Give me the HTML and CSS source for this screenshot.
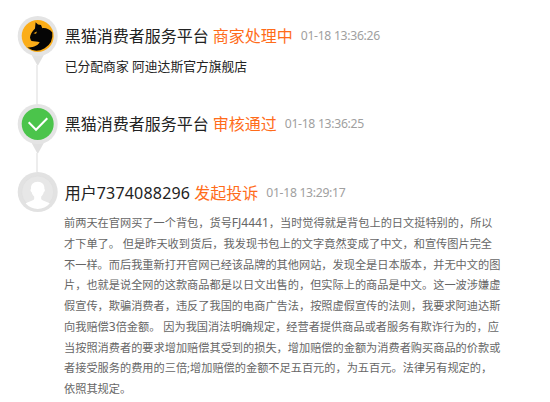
FILE: index.html
```html
<!DOCTYPE html>
<html lang="zh-CN">
<head>
  <meta charset="UTF-8">
  <title>投诉进度</title>
  <link rel="stylesheet" href="styles.css">
</head>
<body>

  <ul class="timeline">
    <li class="step step-assigned">
      <div class="marker">
        <svg width="40" height="49" viewBox="0 0 40 49">
          <path d="M12 36h15.500L19.700 50z" fill="#e0e0e0"/>
          <circle cx="19.700" cy="20" r="20" fill="#e4e4e4"/>
          <circle cx="19.700" cy="20" r="16" fill="#fbad18"/>
          <path d="M17.600 6.200L20 8.600L23 8.900L24.300 12.200C28 11.700 32 13.500 34.300 16.500A16 16 0 0 1 9.300 31.600C14 31 19 30.800 21.700 26.200C19.500 25 16 25.400 13.700 24.900C12.300 24 12.500 22.800 12 21.500C12.300 18.500 14 15.500 17 12.500Z" fill="#050505"/>
          <path d="M15.500 17.300l3.500-1.800-1 2.300z" fill="#fbad18"/>
        </svg>
        <span class="line"></span>
      </div>
      <div class="content">
        <div class="title">
          <span class="name">黑猫消费者服务平台</span>
          <span class="status">商家处理中</span>
          <span class="time">01-18 13:36:26</span>
        </div>
        <p class="note">已分配商家 阿迪达斯官方旗舰店</p>
      </div>
    </li>

    <li class="step step-approved">
      <div class="marker">
        <svg width="40" height="49" viewBox="0 0 40 49">
          <path d="M12 36h15.500L19.700 50z" fill="#e0e0e0"/>
          <circle cx="19.700" cy="20" r="20" fill="#e4e4e4"/>
          <circle cx="19.700" cy="20" r="16" fill="#4bc44b"/>
          <path d="M10.700 18.300l7.300 7.400 11.300-11.500" fill="none" stroke="#fff" stroke-width="2"/>
        </svg>
        <span class="line"></span>
      </div>
      <div class="content">
        <div class="title">
          <span class="name">黑猫消费者服务平台</span>
          <span class="status">审核通过</span>
          <span class="time">01-18 13:36:25</span>
        </div>
      </div>
    </li>

    <li class="step step-created">
      <div class="marker">
        <svg width="40" height="40" viewBox="0 0 40 40">
          <circle cx="19.700" cy="20" r="20" fill="#e2e2e2"/>
          <circle cx="19.700" cy="20" r="16" fill="#e7e7e7" stroke="#dedede" stroke-width=".6"/>
          <path d="M19.700 9.700c-4.500 0-7.100 3-6.700 7.300-.8.200-.7 2.700.7 3.300.5 2.200 1.300 3.300 2.500 4.200v2.500c-1 2-6 2.400-8.500 4.500a16 16 0 0 0 24 0c-2.500-2.100-7.500-2.500-8.500-4.500v-2.500c1.200-.9 2-2 2.500-4.200 1.400-.6 1.500-3.100.7-3.300.4-4.300-2.200-7.300-6.700-7.300z" fill="#fff"/>
        </svg>
      </div>
      <div class="content">
        <div class="title">
          <span class="name">用户<span class="uid">7374088296</span></span>
          <span class="status">发起投诉</span>
          <span class="time">01-18 13:29:17</span>
        </div>
        <p class="detail">
          前两天在官网买了一个背包，货号<span class="code">FJ4441</span>，当时觉得就是背包上的日文挺特别的，所以<br>
          才下单了。 但是昨天收到货后，我发现书包上的文字竟然变成了中文，和宣传图片完全<br>
          不一样。而后我重新打开官网已经该品牌的其他网站，发现全是日本版本，并无中文的图<br>
          片，也就是说全网的这款商品都是以日文出售的，但实际上的商品是中文。这一波涉嫌虚<br>
          假宣传，欺骗消费者，违反了我国的电商广告法，按照虚假宣传的法则，我要求阿迪达斯<br>
          向我赔偿<span class="code">3</span>倍金额。 因为我国消法明确规定，经营者提供商品或者服务有欺诈行为的，应<br>
          当按照消费者的要求增加赔偿其受到的损失，增加赔偿的金额为消费者购买商品的价款或<br>
          者接受服务的费用的三倍;增加赔偿的金额不足五百元的，为五百元。法律另有规定的，<br>
          依照其规定。
        </p>
      </div>
    </li>
  </ul>

</body>
</html>
```

FILE: styles.css
```css
* {
  box-sizing: border-box;
}

body {
  margin: 0;
  background: #fff;
  font-family: "Noto Sans", "Noto Sans CJK SC", sans-serif;
  overflow: hidden;
}

.timeline {
  list-style: none;
  margin: 0;
  padding: 16px 0 0 17.7px;
}

.step {
  display: flex;
}

.step-assigned {
  height: 88px;
}

.step-approved {
  height: 68px;
}

/* Marker column */
.marker {
  width: 40px;
  flex: none;
  display: flex;
  flex-direction: column;
}

.marker svg {
  display: block;
  flex: none;
  overflow: visible;
}

.line {
  flex: 1;
  width: 2px;
  margin-left: 18.3px;
  background: #ededed;
}

/* Text column */
.content {
  padding-left: 7px;
  white-space: nowrap;
}

.title {
  display: flex;
  align-items: center;
  height: 40px;
  font-size: 16px;
  line-height: 40px;
  color: #222;
}

.step-created .title {
  height: 42px;
}

.uid {
  letter-spacing: 0.2px;
}

.status {
  margin-left: 4px;
  color: #ff6c1a;
}

.time {
  margin-left: 8px;
  font-size: 12.2px;
  letter-spacing: -0.3px;
  color: #a0a0a0;
}

.note {
  margin: -1px 0 0;
  font-size: 12.8px;
  line-height: 22px;
  color: #222;
}

.detail {
  margin: -1px 0 0 -0.7px;
  font-size: 11.2px;
  line-height: 20.75px;
  color: #666;
}

.code {
  font-size: 12px;
  line-height: 1;
}
```
